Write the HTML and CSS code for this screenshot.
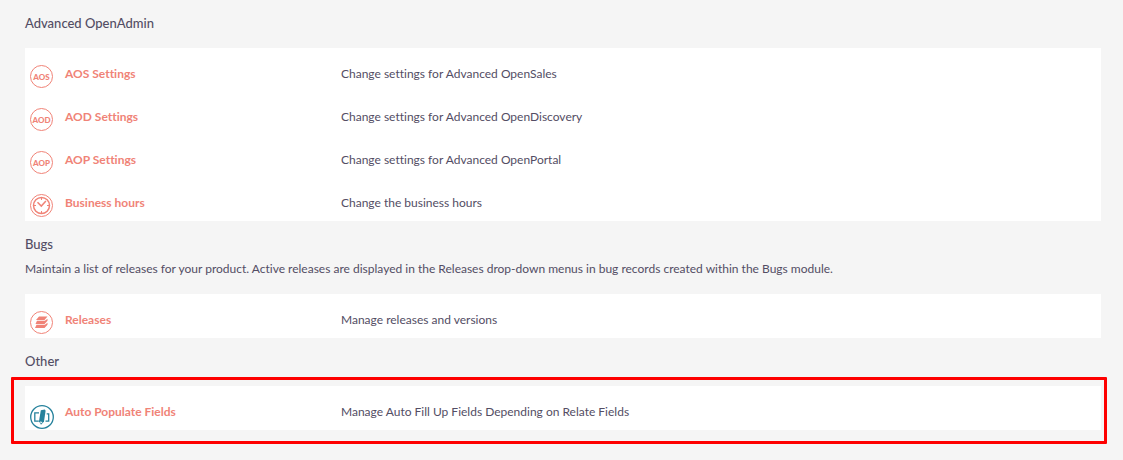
FILE: index.html
```
<!DOCTYPE html>
<html lang="en">
<head>
    <meta charset="UTF-8">
    <meta name="viewport" content="width=device-width, initial-scale=1.0">
    <title>Administration</title>
    <link rel="stylesheet" href="styles.css">
</head>
<body>

    <!-- Advanced OpenAdmin -->
    <section class="admin-section">
        <h2>Advanced OpenAdmin</h2>
        <div class="panel">
            <table class="admin-table">
                <tr>
                    <td class="icon">
                        <svg viewBox="0.5 0.5 23 23"><circle cx="12" cy="12" r="11"/><text x="12" y="15">AOS</text></svg>
                    </td>
                    <td class="name"><a href="#">AOS Settings</a></td>
                    <td>Change settings for Advanced OpenSales</td>
                </tr>
                <tr>
                    <td class="icon">
                        <svg viewBox="0.5 0.5 23 23"><circle cx="12" cy="12" r="11"/><text x="12" y="15">AOD</text></svg>
                    </td>
                    <td class="name"><a href="#">AOD Settings</a></td>
                    <td>Change settings for Advanced OpenDiscovery</td>
                </tr>
                <tr>
                    <td class="icon">
                        <svg viewBox="0.5 0.5 23 23"><circle cx="12" cy="12" r="11"/><text x="12" y="15">AOP</text></svg>
                    </td>
                    <td class="name"><a href="#">AOP Settings</a></td>
                    <td>Change settings for Advanced OpenPortal</td>
                </tr>
                <tr>
                    <td class="icon">
                        <svg viewBox="0.5 0.5 23 23">
                            <circle cx="12" cy="12" r="11"/>
                            <circle class="thick" cx="12" cy="12" r="8"/>
                            <path class="thick" d="M8 8.8l3.8 3.8 4.6-5"/>
                            <path d="M12 4v2.5M12 17.5v2.5M4 12h2.5M17.5 12h2.5"/>
                        </svg>
                    </td>
                    <td class="name"><a href="#">Business hours</a></td>
                    <td>Change the business hours</td>
                </tr>
            </table>
        </div>
    </section>

    <!-- Bugs -->
    <section class="admin-section">
        <h2>Bugs</h2>
        <p>Maintain a list of releases for your product. Active releases are displayed in the Releases drop-down menus in bug records created within the Bugs module.</p>
        <div class="panel">
            <table class="admin-table">
                <tr>
                    <td class="icon">
                        <svg viewBox="0.5 0.5 23 23">
                            <circle cx="12" cy="12" r="11"/>
                            <path class="solid" d="M9.5 6h8.5l-3 3.4H6.5zM7.5 10.3h7.9l2.6-2.1v2l-3 3.2H6zM7 14.3h8.4l2.6-2.1v2l-3 3.4H5.5z"/>
                        </svg>
                    </td>
                    <td class="name"><a href="#">Releases</a></td>
                    <td>Manage releases and versions</td>
                </tr>
            </table>
        </div>
    </section>

    <!-- Other -->
    <section class="admin-section">
        <h2>Other</h2>
        <div class="panel highlight">
            <table class="admin-table">
                <tr>
                    <td class="icon">
                        <svg class="populate" viewBox="0 0 24 24">
                            <circle cx="12" cy="12" r="11.3"/>
                            <path d="M9 7.8H4.8v8.4h4M15.5 16.2h3.2V8.8h-2"/>
                            <path class="solid" d="M10.8 5.2l4-.8.8 1.4-1.6 10.6-3 3.4-2-3.6z"/>
                            <path class="tip" d="M9.9 16.4l2.7.5-1.7 1.6z"/>
                        </svg>
                    </td>
                    <td class="name"><a href="#">Auto Populate Fields</a></td>
                    <td>Manage Auto Fill Up Fields Depending on Relate Fields</td>
                </tr>
            </table>
        </div>
    </section>

</body>
</html>
```

FILE: styles.css
```
body {
    margin: 0;
    padding: 0 22px 30px 25px;
    font-family: Lato, sans-serif;
    font-size: 12px;
    line-height: 18px;
    font-variant-ligatures: none;
    color: #534d64;
    background-color: #f5f5f5;
}

.admin-section {
    padding-top: 14px;
}

.admin-section h2 {
    margin: 0;
    font-size: 13px;
    font-weight: 500;
}

.admin-section p {
    margin: 7px 0 0;
}

.panel {
    margin-top: 16px;
    padding-bottom: 1px;
    background-color: #fff;
}

.admin-table {
    width: 100%;
    table-layout: fixed;
    border-collapse: collapse;
}

.admin-table td {
    height: 26px;
    padding: 17px 0 0;
    vertical-align: top;
}

.admin-table .icon {
    width: 35px;
    padding-left: 5px;
}

.admin-table .name {
    width: 276px;
}

.admin-table a {
    color: #f08377;
    font-weight: bold;
    text-decoration: none;
}

.icon svg {
    display: block;
    width: 23px;
    height: 23px;
    fill: none;
    stroke: #f08377;
    stroke-width: 1;
}

.icon text {
    fill: #f08377;
    stroke: none;
    font-size: 8px;
    font-weight: 900;
    text-anchor: middle;
}

.icon .thick {
    stroke-width: 1.5;
}

.icon .solid {
    fill: #f08377;
    stroke: none;
}

.icon .populate {
    width: 24px;
    height: 24px;
    margin-top: 2px;
    stroke: #26829c;
    stroke-width: 1.3;
}

.icon .populate .solid {
    fill: #26829c;
}

.icon .populate .tip {
    fill: #fff;
    stroke: none;
}

/* Red frame around the new entry */
.highlight {
    position: relative;
}

.highlight::after {
    content: "";
    position: absolute;
    top: -9px;
    right: -6px;
    bottom: -14px;
    left: -14px;
    border: 3px solid #fe0000;
    border-radius: 1px;
    pointer-events: none;
}
```
